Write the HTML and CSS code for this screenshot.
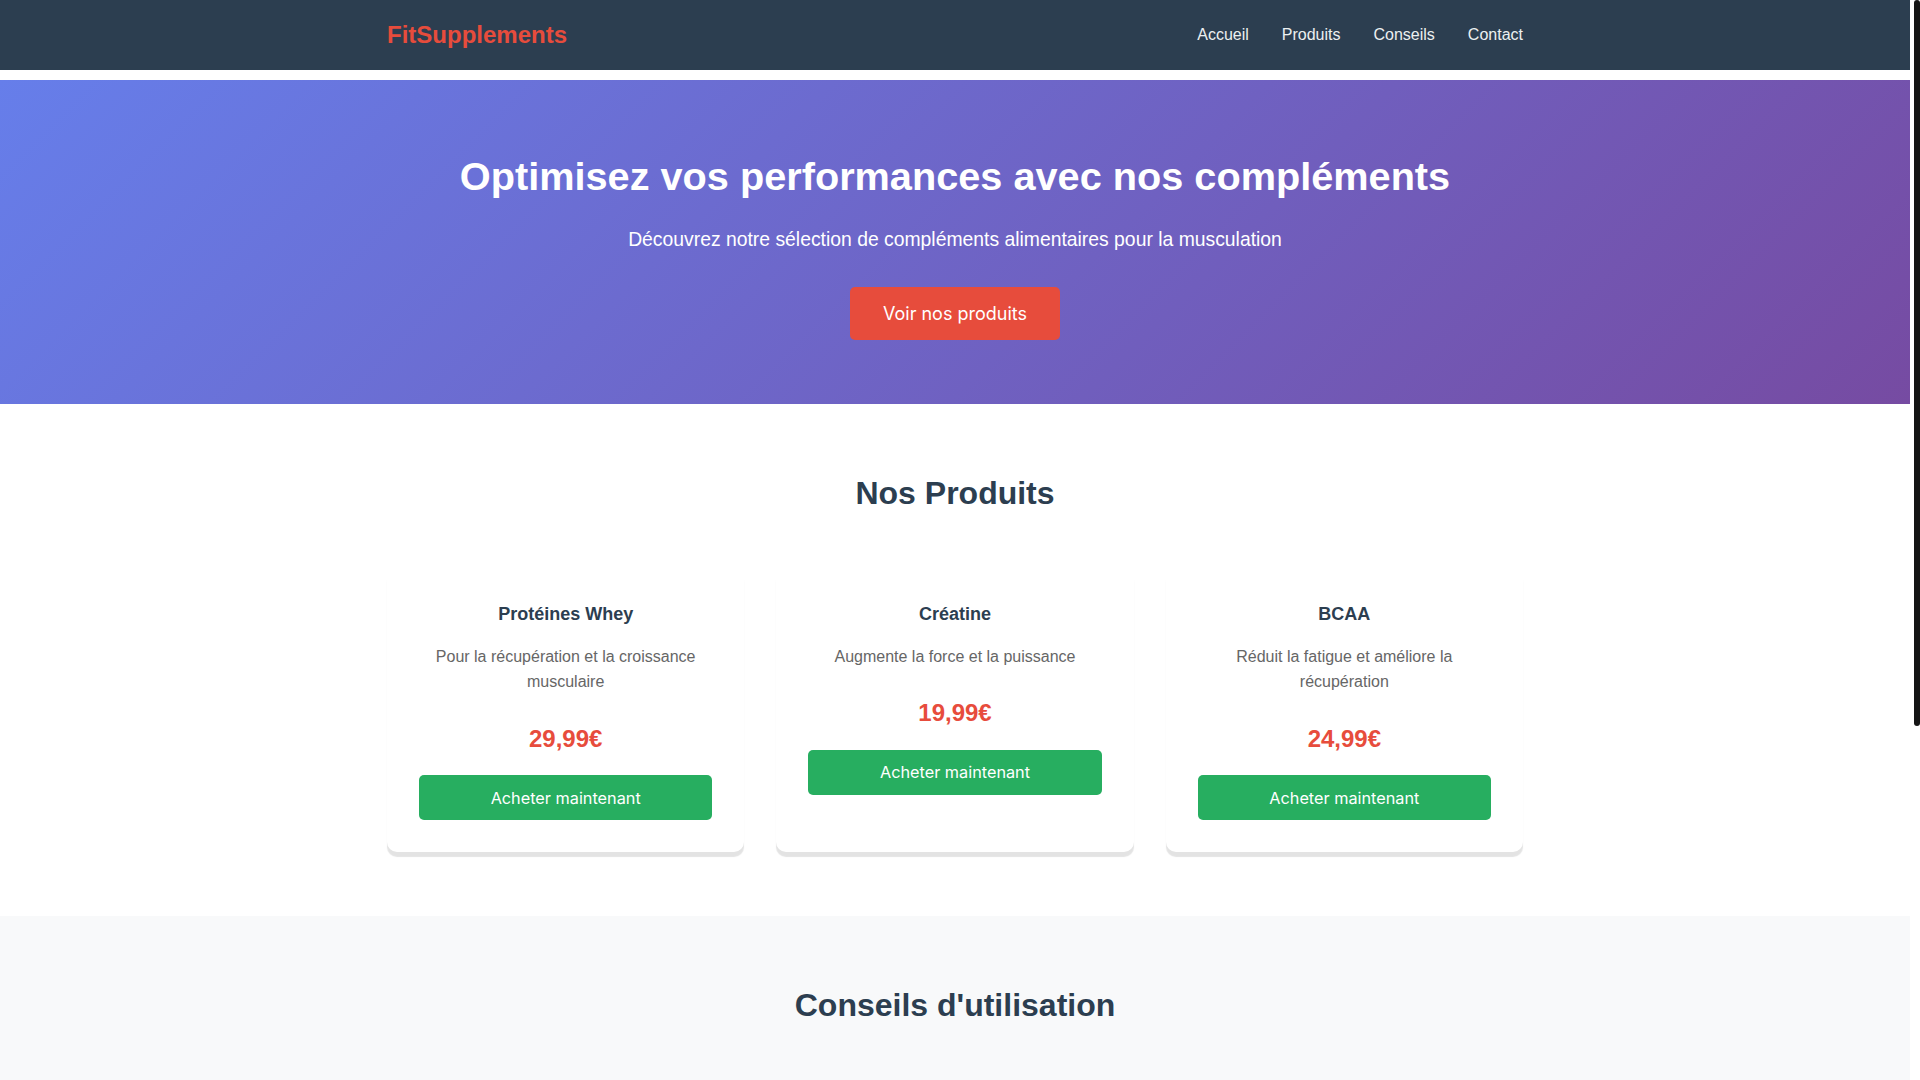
FILE: index.html
```html
<!DOCTYPE html>
<html lang="fr">
<head>
    <meta charset="UTF-8">
    <meta name="viewport" content="width=device-width, initial-scale=1.0">
    <title>FitSupplements - Compléments alimentaires pour la musculation</title>
    <link rel="stylesheet" href="styles.css">
</head>
<body>
    <!-- Header -->
    <header class="site-header">
        <div class="container nav-bar">
            <div class="logo">FitSupplements</div>
            <nav class="nav-links">
                <a href="#accueil">Accueil</a>
                <a href="#produits">Produits</a>
                <a href="#conseils">Conseils</a>
                <a href="#contact">Contact</a>
            </nav>
        </div>
    </header>

    <!-- Hero -->
    <section class="hero" id="accueil">
        <div class="container">
            <h1>Optimisez vos performances avec nos compléments</h1>
            <p>Découvrez notre sélection de compléments alimentaires pour la musculation</p>
            <a href="#produits" class="btn btn-hero">Voir nos produits</a>
        </div>
    </section>

    <!-- Products -->
    <section class="products" id="produits">
        <div class="container">
            <h2 class="section-title">Nos Produits</h2>
            <div class="product-grid">
                <div class="product-card">
                    <h3>Protéines Whey</h3>
                    <p>Pour la récupération et la croissance musculaire</p>
                    <div class="price">29,99€</div>
                    <button class="btn-buy">Acheter maintenant</button>
                </div>
                <div class="product-card">
                    <h3>Créatine</h3>
                    <p>Augmente la force et la puissance</p>
                    <div class="price">19,99€</div>
                    <button class="btn-buy">Acheter maintenant</button>
                </div>
                <div class="product-card">
                    <h3>BCAA</h3>
                    <p>Réduit la fatigue et améliore la récupération</p>
                    <div class="price">24,99€</div>
                    <button class="btn-buy">Acheter maintenant</button>
                </div>
            </div>
        </div>
    </section>

    <!-- Tips -->
    <section class="tips" id="conseils">
        <div class="container">
            <h2 class="section-title tips-title">Conseils d'utilisation</h2>
            <div class="tips-grid">
                <div class="tip">
                    <h3>Protéines</h3>
                    <ul>
                        <li>1 à 2 doses par jour</li>
                        <li>Idéalement après l'entraînement</li>
                        <li>À mélanger avec de l'eau ou du lait</li>
                    </ul>
                </div>
                <div class="tip">
                    <h3>Créatine</h3>
                    <ul>
                        <li>3 à 5 g par jour</li>
                        <li>Tous les jours, même au repos</li>
                        <li>Boire beaucoup d'eau</li>
                    </ul>
                </div>
                <div class="tip">
                    <h3>BCAA</h3>
                    <ul>
                        <li>Avant ou pendant la séance</li>
                        <li>5 à 10 g par prise</li>
                        <li>Idéal en période de sèche</li>
                    </ul>
                </div>
            </div>
        </div>
    </section>

    <!-- Footer -->
    <footer class="site-footer" id="contact">
        <div class="container">
            <h3>Contact</h3>
            <p>Email : contact@fitsupplements.fr</p>
            <p>Téléphone : 01 23 45 67 89</p>
            <p class="copyright">&copy; 2024 FitSupplements. Tous droits réservés.</p>
        </div>
    </footer>

    <!-- Scroll indicator -->
    <div class="scroll-thumb" aria-hidden="true"></div>
</body>
</html>
```

FILE: styles.css
```css
/* General Reset */
* {
    box-sizing: border-box;
    margin: 0;
    padding: 0;
}

body {
    font-family: "Liberation Sans", Arial, sans-serif;
    line-height: 1.6;
    color: #333;
    background-color: #fff;
    margin-right: 10px; /* room for the scroll track */
}

.scroll-thumb {
    position: fixed;
    top: 0;
    right: 0;
    width: 6px;
    height: 726px;
    background-color: #151515;
    border-radius: 3px;
}

.container {
    max-width: 1200px;
    margin: 0 auto;
    padding: 0 2rem;
}

/* Header */
.site-header {
    background-color: #2c3e50;
    height: 70px;
}

.nav-bar {
    display: flex;
    justify-content: space-between;
    align-items: center;
    height: 100%;
}

.logo {
    font-size: 1.5rem;
    font-weight: bold;
    color: #e74c3c;
}

.nav-links {
    display: flex;
    gap: 33px;
}

.nav-links a {
    color: #ecf0f1;
    text-decoration: none;
}

/* Hero */
.hero {
    margin-top: 10px;
    background: linear-gradient(135deg, #667eea 0%, #764ba2 100%);
    color: #fff;
    text-align: center;
    padding: 4rem 0;
}

.hero h1 {
    font-size: 39.7px;
    line-height: 64px;
    margin-bottom: 1rem;
}

.hero p {
    font-size: 19.35px;
    line-height: 30.7px;
    margin-bottom: 2rem;
}

.btn {
    display: inline-block;
    font-family: Inter, sans-serif;
    text-decoration: none;
    border-radius: 5px;
}

.btn-hero {
    background-color: #e74c3c;
    color: #fff;
    font-size: 18px;
    padding: 13px 33px;
    line-height: 1.5;
}

/* Products */
.products {
    padding: 4rem 0;
}

.section-title {
    text-align: center;
    font-size: 2rem;
    color: #2c3e50;
    margin-bottom: 49px;
}

.product-grid {
    display: grid;
    grid-template-columns: repeat(3, 1fr);
    gap: 2rem;
}

.product-card {
    background: #fff;
    border-radius: 10px;
    padding: 2rem;
    text-align: center;
    box-shadow: 0 5px 1px rgba(0, 0, 0, 0.11);
}

.product-card h3 {
    font-size: 18px;
    color: #2c3e50;
    margin-bottom: 15px;
}

.product-card p {
    color: #666;
}

.price {
    font-size: 1.5rem;
    font-weight: bold;
    color: #e74c3c;
    margin: 25px 0 17px;
}

.btn-buy {
    width: 100%;
    background-color: #27ae60;
    color: #fff;
    border: none;
    border-radius: 5px;
    padding: 12.5px;
    font-family: Inter, sans-serif;
    font-size: 16.25px;
    cursor: pointer;
}

.btn-buy:hover {
    background-color: #219150;
}

/* Tips */
.tips {
    background-color: #f8f9fa;
    padding: 4rem 0;
}

.tips-title {
    margin-bottom: 4rem;
}

.tips-grid {
    display: grid;
    grid-template-columns: repeat(3, 1fr);
    gap: 2rem;
}

.tip {
    background: #fff;
    border-left: 4px solid #e74c3c;
    border-radius: 5px;
    padding: 1.5rem;
}

.tip h3 {
    color: #2c3e50;
    margin-bottom: 0.5rem;
}

.tip ul {
    list-style: none;
    color: #666;
}

/* Footer */
.site-footer {
    background-color: #2c3e50;
    color: #fff;
    text-align: center;
    padding: 3rem 0;
}

.site-footer h3 {
    margin-bottom: 0.5rem;
}

.copyright {
    margin-top: 1.5rem;
    color: #bdc3c7;
    font-size: 0.9rem;
}
```
